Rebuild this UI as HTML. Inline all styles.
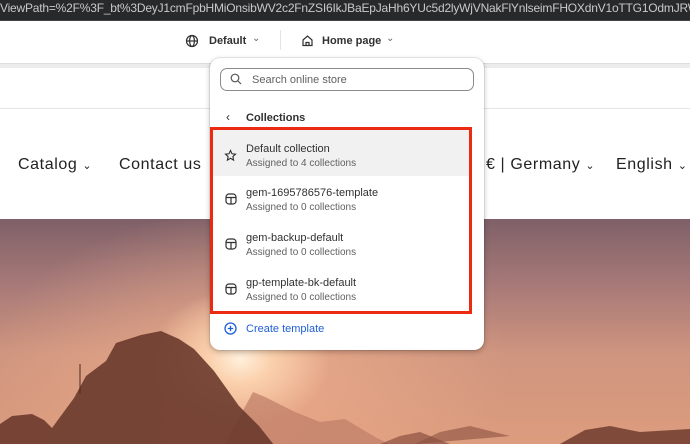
<!DOCTYPE html>
<html><head><meta charset="utf-8"><style>
*{margin:0;padding:0;box-sizing:border-box}
body{width:690px;height:444px;overflow:hidden;position:relative;font-family:"Liberation Sans",sans-serif;background:#fff}
.a{position:absolute}
.url{left:0;top:0;width:690px;height:20px;background:#28292b;color:#c9c9c9;font-size:12px;line-height:16px;white-space:nowrap;overflow:hidden;letter-spacing:-0.2px}
.tb{left:0;top:20px;width:690px;height:43px;background:#fff;border-top:1px solid #444}
.g1{left:0;top:63px;width:690px;height:5px;background:#ececec;border-top:1px solid #ddd}
.hl{left:0;top:108px;width:690px;height:1px;background:#e6e6e6}
.nav{top:156px;font-size:16px;color:#222;letter-spacing:0.6px}
.hero{left:0;top:219px;width:690px;height:225px;background:
radial-gradient(ellipse 90px 70px at 240px 140px,#fff0dc 0%,#fbd0ac 35%,rgba(240,170,135,0) 100%),
radial-gradient(ellipse 260px 160px at 250px 150px,rgba(240,175,140,.8) 0%,rgba(220,150,125,0) 100%),
linear-gradient(180deg,#7f6068 0%,#a87a78 30%,#cf957f 60%,#dc9c7e 100%)}
.pop{left:210px;top:58px;width:274px;height:292px;background:#fff;border-radius:10px;box-shadow:0 2px 6px rgba(0,0,0,.25),0 0 0 1px rgba(0,0,0,.08)}
.srch{left:220px;top:68px;width:254px;height:23px;border:1px solid #8a8a8a;border-radius:7px;font-size:11px;color:#616161;padding:5px 0 0 31px}
.t{font-size:11px;color:#303030}
.s{font-size:10px;color:#616161}
.red{left:210px;top:127px;width:262px;height:187px;border:3px solid #ec2a12}
</style></head><body>
<div class="a url">ViewPath=%2F%3F_bt%3DeyJ1cmFpbHMiOnsibWV2c2FnZSI6IkJBaEpJaHh6YUc5d2lyWjVNakFlYnlseimFHOXdnV1oTTG1OdmJRW1</div>
<div class="a tb"></div>
<svg class="a" style="left:185px;top:34px" width="14" height="14" viewBox="0 0 14 14" fill="none" stroke="#303030" stroke-width="1.2"><circle cx="7" cy="7" r="5.5"/><ellipse cx="7" cy="7" rx="2.4" ry="5.5"/><path d="M1.5 7h11"/></svg>
<div class="a t" style="left:209px;top:35px;font-weight:bold;font-size:11px">Default</div>
<div class="a" style="left:252px;top:33px;font-size:10px;color:#666">⌄</div>
<div class="a" style="left:280px;top:30px;width:1px;height:20px;background:#e3e3e3"></div>
<svg class="a" style="left:301px;top:34px" width="13" height="13" viewBox="0 0 13 13" fill="none" stroke="#303030" stroke-width="1.2"><path d="M2 6L6.5 2 11 6v5.5H2z"/><path d="M5 11.5v-3h3v3"/></svg>
<div class="a t" style="left:322px;top:35px;font-weight:bold;font-size:11px">Home page</div>
<div class="a" style="left:386px;top:33px;font-size:10px;color:#666">⌄</div>
<div class="a g1"></div>
<div class="a hl"></div>
<div class="a nav" style="left:18px">Catalog <span style="font-size:11px">⌄</span></div>
<div class="a nav" style="left:119px">Contact us</div>
<div class="a nav" style="left:486px">€ | Germany <span style="font-size:11px">⌄</span></div>
<div class="a nav" style="left:616px">English <span style="font-size:11px">⌄</span></div>
<div class="a hero">
<svg width="690" height="225" viewBox="0 0 690 225" style="position:absolute;left:0;top:0">
<path d="M225 225l28-52 12 5 30 15 25 10 25-3 30 18 20 10 20 22z" fill="#c0806a" opacity=".75"/>
<path d="M0 225v-20l12-8 20-2 12 6 8 8 22-30 12-22 20-15 10-18 25-8 20-4 18 8 15 10 20 22 25 35 20 20 15 19z" fill="#6a3a2c" opacity=".9"/>
<path d="M380 225l20-8 20-4 30 12z" fill="#8a5040" opacity=".7"/>
<path d="M415 225l25-12 30-6 40 10z" fill="#8a5040" opacity=".6"/>
<path d="M560 225l25-14 25-4 30 6 50-3v15z" fill="#6e3c2e" opacity=".85"/>
<path d="M80 175v-30" stroke="#4a2a20" stroke-width="1"/>
</svg>
</div>
<div class="a pop"></div>
<div class="a srch">Search online store</div>
<svg class="a" style="left:230px;top:73px" width="12" height="12" viewBox="0 0 12 12" fill="none" stroke="#555" stroke-width="1.2"><circle cx="5" cy="5" r="3.8"/><path d="M8 8l3 3"/></svg>
<div class="a" style="left:226px;top:110px;font-size:12px;color:#303030">‹</div>
<div class="a t" style="left:246px;top:112px;font-weight:bold">Collections</div>
<div class="a" style="left:213px;top:130px;width:256px;height:46px;background:#f1f1f1"></div>
<svg class="a" style="left:224px;top:149px" width="13" height="13" viewBox="0 0 13 13" fill="none" stroke="#303030" stroke-width="1.1"><path d="M6.5 1.5l1.5 3.3 3.5.4-2.6 2.4.7 3.5-3.1-1.8-3.1 1.8.7-3.5L1.5 5.2 5 4.8z"/></svg>
<div class="a t" style="left:246px;top:143px">Default collection</div>
<div class="a s" style="left:246px;top:158px">Assigned to 4 collections</div>
<svg class="a" style="left:225px;top:193px" width="12" height="12" viewBox="0 0 12 12" fill="none" stroke="#303030" stroke-width="1.2"><rect x="1" y="1" width="10" height="10" rx="3"/><path d="M1 4.5h10M6 4.5V11"/></svg>
<div class="a t" style="left:246px;top:187px">gem-1695786576-template</div>
<div class="a s" style="left:246px;top:202px">Assigned to 0 collections</div>
<svg class="a" style="left:225px;top:238px" width="12" height="12" viewBox="0 0 12 12" fill="none" stroke="#303030" stroke-width="1.2"><rect x="1" y="1" width="10" height="10" rx="3"/><path d="M1 4.5h10M6 4.5V11"/></svg>
<div class="a t" style="left:246px;top:232px">gem-backup-default</div>
<div class="a s" style="left:246px;top:247px">Assigned to 0 collections</div>
<svg class="a" style="left:225px;top:283px" width="12" height="12" viewBox="0 0 12 12" fill="none" stroke="#303030" stroke-width="1.2"><rect x="1" y="1" width="10" height="10" rx="3"/><path d="M1 4.5h10M6 4.5V11"/></svg>
<div class="a t" style="left:246px;top:277px">gp-template-bk-default</div>
<div class="a s" style="left:246px;top:292px">Assigned to 0 collections</div>
<div class="a red"></div>
<svg class="a" style="left:224px;top:322px" width="13" height="13" viewBox="0 0 13 13" fill="none" stroke="#1f5fd6" stroke-width="1.3"><circle cx="6.5" cy="6.5" r="5.5"/><path d="M6.5 3.8v5.4M3.8 6.5h5.4"/></svg>
<div class="a" style="left:246px;top:323px;font-size:11px;color:#1f5fd6">Create template</div>
</body></html>
